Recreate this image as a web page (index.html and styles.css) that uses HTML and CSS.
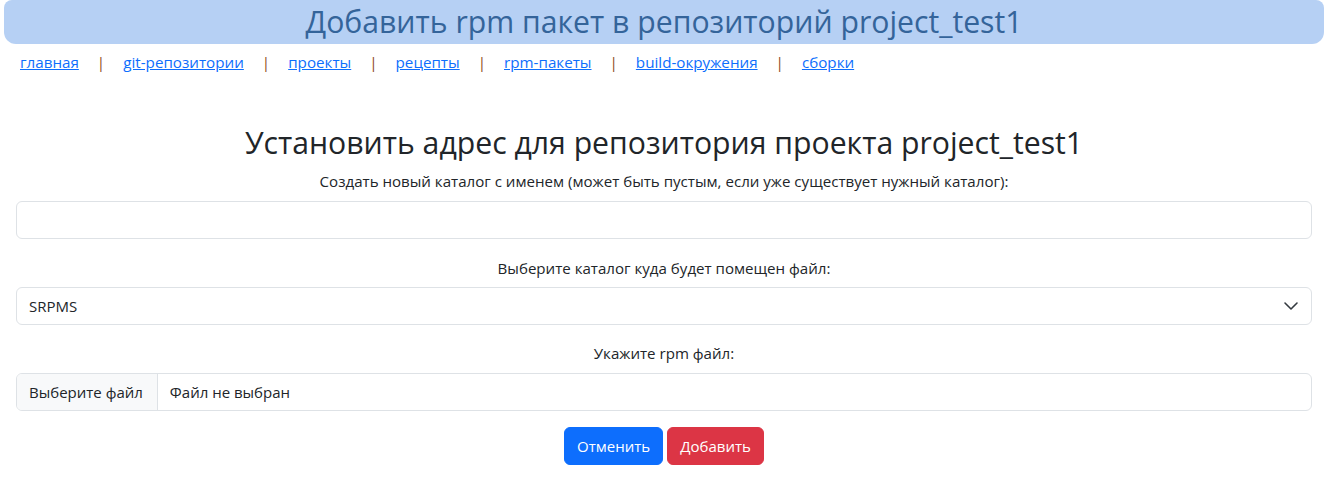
FILE: index.html
```html
<!DOCTYPE html>
<html lang="ru">
<head>
<meta charset="utf-8">
<title>Добавить rpm пакет</title>
<link rel="stylesheet" href="styles.css">
</head>
<body>
<header class="topbar"><h1 class="topbar-title">Добавить rpm пакет в репозиторий project_test1</h1></header>
<nav class="nav">
  <a href="#">главная</a><span class="sep">|</span>
  <a href="#">git-репозитории</a><span class="sep">|</span>
  <a href="#">проекты</a><span class="sep">|</span>
  <a href="#">рецепты</a><span class="sep">|</span>
  <a href="#">rpm-пакеты</a><span class="sep">|</span>
  <a href="#">build-окружения</a><span class="sep">|</span>
  <a href="#">сборки</a>
</nav>
<main class="page">
  <h2 class="form-title">Установить адрес для репозитория проекта project_test1</h2>
  <form class="form">
    <div class="group group-first">
      <label class="form-label" for="dir">Создать новый каталог с именем (может быть пустым, если уже существует нужный каталог):</label>
      <input class="form-control" id="dir" type="text">
    </div>
    <div class="group">
      <label class="form-label" for="cat">Выберите каталог куда будет помещен файл:</label>
      <div class="select-wrap">
        <select class="form-control form-select" id="cat"><option>SRPMS</option></select>
        <svg class="chevron" width="16" height="16" viewBox="0 0 16 16"><path d="M2 5l6 6 6-6" fill="none" stroke="#343a40" stroke-width="1.6" stroke-linecap="round" stroke-linejoin="round"/></svg>
      </div>
    </div>
    <div class="group">
      <label class="form-label">Укажите rpm файл:</label>
      <div class="file-input">
        <span class="file-btn">Выберите файл</span>
        <span class="file-name">Файл не выбран</span>
      </div>
    </div>
    <div class="actions">
      <button type="button" class="btn btn-primary">Отменить</button>
      <button type="button" class="btn btn-danger">Добавить</button>
    </div>
  </form>
</main>
</body>
</html>
```
FILE: styles.css
```css
* { box-sizing: border-box; }
body {
  margin: 0;
  font-family: "Open Sans", "Noto Sans", sans-serif;
  font-size: 16px;
  line-height: 1.5;
  color: #212529;
  background: #fff;
}
.topbar {
  margin: 0 4px;
  height: 44px;
  background: #b6d0f4;
  border-radius: 8px 8px 12px 12px;
  display: flex;
  align-items: center;
  justify-content: center;
}
.topbar-title {
  margin: 0;
  font-size: 30.2px;
  font-weight: 400;
  line-height: 1.2;
  color: #34649a;
}
.nav {
  display: flex;
  align-items: center;
  gap: 18px;
  padding: 6px 20px 0;
  height: 30px;
  font-size: 15.2px;
}
.nav a { color: #0d6efd; text-decoration: underline; }
.sep { color: #8b4513; }
.page { padding: 0 16px; }
.form-title {
  margin: 50px 0 8px;
  text-align: center;
  font-size: 30.2px;
  font-weight: 400;
  line-height: 37.2px;
}
.group { margin-bottom: 16px; text-align: center; }
.group-first { margin-bottom: 17px; }
.form-label { display: inline-block; margin-bottom: 8px; font-size: 15.1px; }
.form-control {
  display: block;
  width: 100%;
  height: 38px;
  padding: 6px 12px;
  font: inherit;
  font-size: 15px;
  color: #212529;
  background: #fff;
  border: 1px solid #dee2e6;
  border-radius: 6px;
  text-align: left;
}
.select-wrap { position: relative; }
.form-select { appearance: none; -webkit-appearance: none; padding-right: 36px; }
.chevron { position: absolute; right: 13px; top: 11px; pointer-events: none; }
.file-input {
  display: flex;
  height: 38px;
  border: 1px solid #dee2e6;
  border-radius: 6px;
  overflow: hidden;
  text-align: left;
  font-size: 15px;
}
.file-btn {
  display: flex;
  align-items: center;
  padding: 0 14px 0 12px;
  background: #f8f9fa;
  border-right: 1px solid #dee2e6;
}
.file-name { display: flex; align-items: center; padding: 0 12px; }
.actions { text-align: center; }
.btn {
  height: 38px;
  padding: 6px 12px;
  font: inherit;
  font-size: 15px;
  color: #fff;
  border: 1px solid transparent;
  border-radius: 6px;
}
.btn-primary { background: #0d6efd; border-color: #0d6efd; }
.btn-danger { background: #dc3545; border-color: #dc3545; }
```
